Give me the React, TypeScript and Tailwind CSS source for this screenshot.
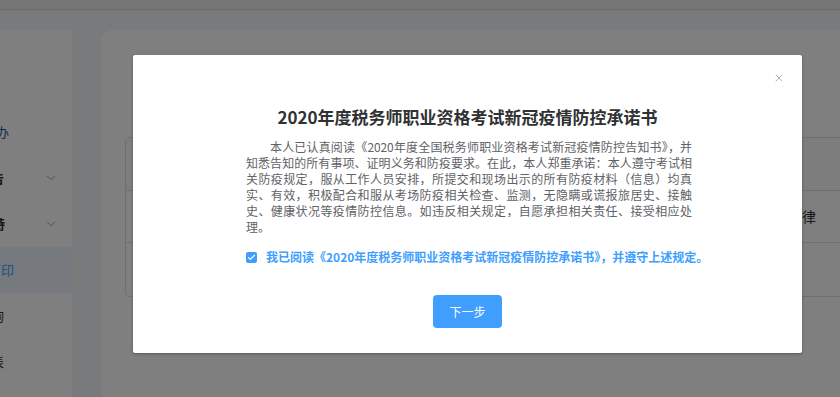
import { X, ChevronDown, Check } from "lucide-react";

const menu = [
  { label: "网上业务办", edge: "w-[9px]", tone: "text-[#2b5fa0]", arrow: false, active: false },
  { label: "报名信息报告", edge: "w-[4px]", tone: "text-[#303133] font-semibold", arrow: true, active: false },
  { label: "考务服务专特", edge: "w-[5px]", tone: "text-[#303133] font-semibold", arrow: true, active: false },
  { label: "准考证打印", edge: "w-[14px]", tone: "text-[#409eff]", arrow: false, active: true },
  { label: "成绩查询", edge: "w-[4px]", tone: "text-[#303133]", arrow: false, active: false },
  { label: "证书申领表", edge: "w-[4px]", tone: "text-[#303133]", arrow: false, active: false },
];

const lines = [
  "知悉告知的所有事项、证明义务和防疫要求。在此，本人郑重承诺：本人遵守考试相",
  "关防疫规定，服从工作人员安排，所提交和现场出示的所有防疫材料（信息）均真",
  "实、有效，积极配合和服从考场防疫相关检查、监测，无隐瞒或谎报旅居史、接触",
  "史、健康状况等疫情防控信息。如违反相关规定，自愿承担相关责任、接受相应处",
];

export default function App() {
  return (
    <div className="relative h-[397px] w-[840px] overflow-hidden bg-[#f3f4f6] font-['Noto_Sans_CJK_SC',sans-serif]">
      <div className="h-[10px] border-b border-[#d6d6d6] bg-[#ededed]" />

      <div className="flex pt-[20px]">
        <aside className="h-[367px] w-[72px] shrink-0 bg-white pt-[79px] text-[13px]">
          {menu.map((m, i) => (
            <div key={i} className={`flex h-[46px] items-center ${m.active ? "bg-[#ecf5ff]" : ""}`}>
              <div className={`flex shrink-0 justify-end whitespace-nowrap ${m.edge} ${m.tone}`}>{m.label}</div>
              {m.arrow && <ChevronDown size={14} strokeWidth={1.5} className="ml-auto mr-[14px] text-[#909399]" />}
            </div>
          ))}
        </aside>

        <main className="ml-[29px] h-[367px] w-[760px] shrink-0 rounded-tl-[12px] bg-white pl-[24px] pt-[107px]">
          <div className="w-[760px] rounded-[4px] border border-[#dcdfe6] text-[14px] text-[#303133]">
            <div className="grid h-[53px] grid-cols-[578px_1fr] items-center border-b border-[#dcdfe6] bg-[#fafafa] px-[0px]">
              <div className="pl-[40px]">事项</div>
              <div />
            </div>
            <div className="grid h-[52px] grid-cols-[578px_1fr] items-center border-b border-[#dcdfe6]">
              <div className="pl-[40px]">考生须知</div>
              <div>严格遵守考试纪律</div>
            </div>
            <div className="grid h-[53px] grid-cols-[578px_1fr] items-center">
              <div className="pl-[40px]">防疫要求</div>
              <div />
            </div>
          </div>
        </main>
      </div>

      <div className="absolute inset-0 bg-black/50" />

      <div className="absolute left-[133px] top-[55px] h-[298px] w-[669px] rounded-[2px] bg-white pt-[50px] shadow-[0_1px_3px_rgba(0,0,0,0.3)]">
        <button className="absolute right-[17px] top-[17px] text-[#909399]">
          <X size={12} strokeWidth={1.5} />
        </button>

        <h2 className="text-center text-[17px] font-bold leading-[24px] text-[#303133]">
          2020年度税务师职业资格考试新冠疫情防控承诺书
        </h2>

        <div className="ml-[113px] mt-[10px] w-[446px] text-[12px] leading-[16px] text-[#606266]">
          <div className="pl-[24px] text-justify tracking-[-0.1px] [text-align-last:justify]">
            本人已认真阅读《2020年度全国税务师职业资格考试新冠疫情防控告知书》，并
          </div>
          {lines.map((l, i) => (
            <div key={i} className="text-justify [text-align-last:justify]">
              {l}
            </div>
          ))}
          <div>理。</div>
        </div>

        <label className="ml-[113px] mt-[14px] flex h-[16px] items-center gap-[9px] text-[12px] font-bold text-[#409eff]">
          <span className="flex h-[11px] w-[11px] items-center justify-center rounded-[2px] bg-[#409eff]">
            <Check size={9} strokeWidth={3} className="text-white" />
          </span>
          我已阅读《2020年度税务师职业资格考试新冠疫情防控承诺书》，并遵守上述规定。
        </label>

        <div className="mt-[30px] flex justify-center">
          <button className="h-[33px] w-[69px] rounded-[4px] bg-[#409eff] text-[12px] text-white">下一步</button>
        </div>
      </div>
    </div>
  );
}
